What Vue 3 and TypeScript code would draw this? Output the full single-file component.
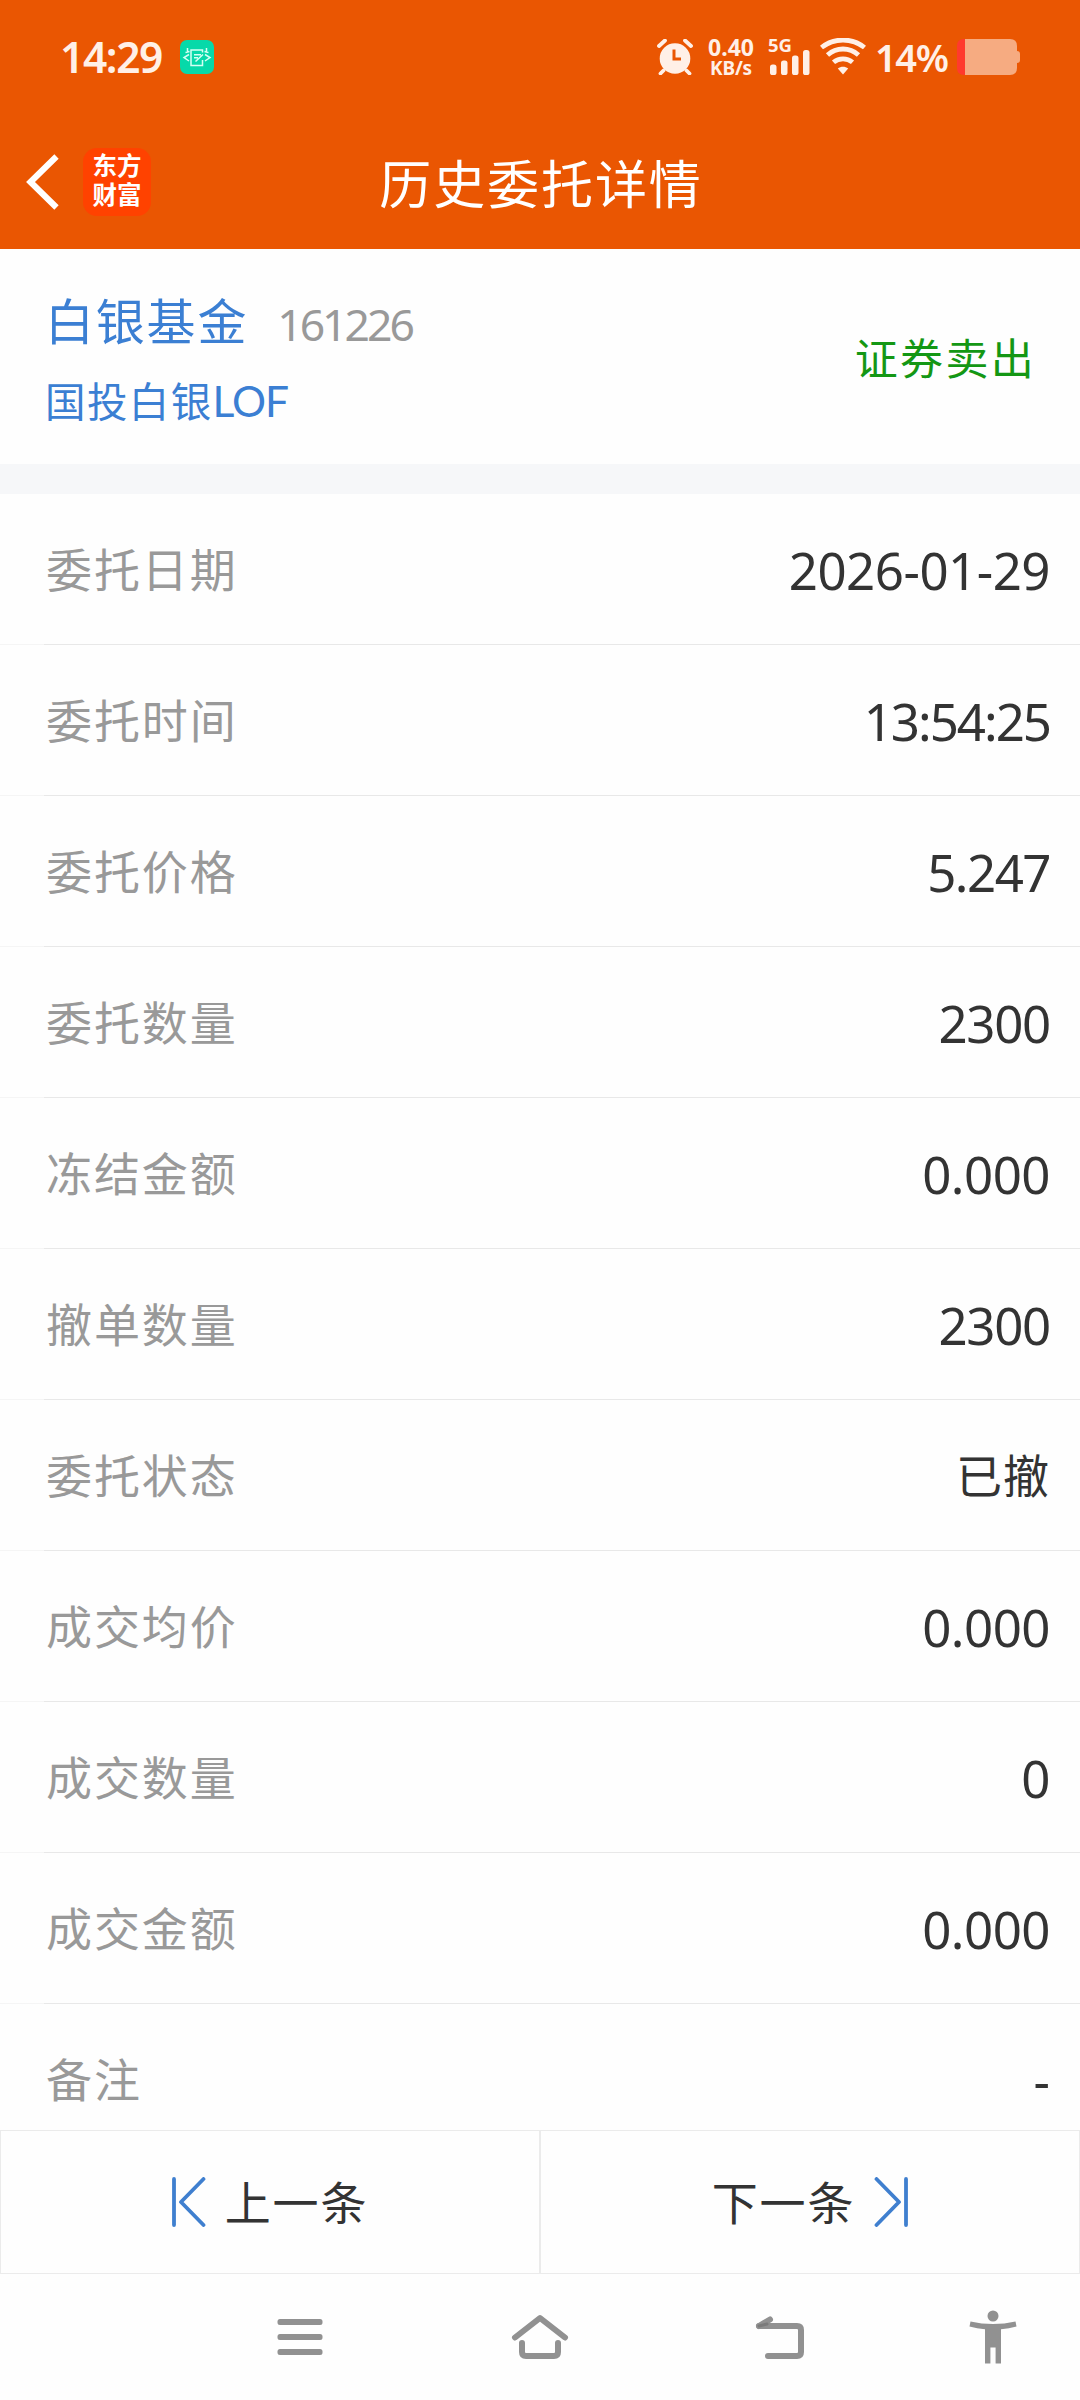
<script setup lang="ts">
interface Row {
  label: string
  value: string
  spacing?: string
  han?: boolean
}

const rows: Row[] = [
  { label: '委托日期', value: '2026-01-29', spacing: '-0.5px' },
  { label: '委托时间', value: '13:54:25', spacing: '-2px' },
  { label: '委托价格', value: '5.247', spacing: '-1.5px' },
  { label: '委托数量', value: '2300', spacing: '-1.3px' },
  { label: '冻结金额', value: '0.000' },
  { label: '撤单数量', value: '2300', spacing: '-1.3px' },
  { label: '委托状态', value: '已撤', spacing: '1px', han: true },
  { label: '成交均价', value: '0.000' },
  { label: '成交数量', value: '0' },
  { label: '成交金额', value: '0.000' },
  { label: '备注', value: '-', spacing: '0px' },
]
</script>

<template>
  <div class="screen">
    <header class="top">
      <div class="status">
        <span class="clock">14:29</span>
        <svg class="app-badge" width="34" height="34" viewBox="0 0 34 34" fill="none">
          <rect width="34" height="34" rx="7" fill="#06d9a9" />
          <g stroke="#d5fff4" stroke-width="1.5">
            <path d="M22.500 20V25.500h-11.500V10h11.500v2.500M14 14.800h7M14 17.800h4M15.500 21.500l7.500-7" />
            <path d="M9 14.500l-5 3 5 3.500M25 14.500l5 3-5 3.500M7.500 8v4.500M26.500 8v4.500M5.500 12.500l4-1M28.500 12.500l-4-1" />
          </g>
        </svg>
        <span class="grow"></span>
        <svg class="alarm" width="36" height="36" viewBox="0 0 36 36" fill="none">
          <circle cx="18" cy="19.500" r="15.300" fill="#fff0e7" />
          <path d="M2 7l6-5.500M34 7l-6-5.500M6.500 31.500L3.500 34.500M29.500 31.500l3 3" stroke="#fff0e7" stroke-width="3.800" stroke-linecap="round" />
          <path d="M17 10.500V20h7" stroke="#ea5602" stroke-width="3" />
        </svg>
        <div class="speed"><span class="rate">0.40</span><span class="unit">KB/s</span></div>
        <div class="cell">
          <span class="gen">5G</span>
          <svg class="bars" width="40" height="25" viewBox="0 0 40 25" fill="#fff0e7">
            <rect x="0" y="14.500" width="6.500" height="10.500" rx="2.600" />
            <rect x="11" y="10.500" width="6.500" height="14.500" rx="2.600" />
            <rect x="22" y="5.500" width="6.500" height="19.500" rx="2.600" />
            <rect x="33" y="0" width="6.500" height="25" rx="2.600" />
          </svg>
        </div>
        <svg class="wifi" width="46" height="37" viewBox="0 0 46 37" fill="none" stroke="#fff0e7" stroke-width="4.800">
          <path d="M1.500 9.500C14-.5 32-.5 44.500 9.500" />
          <path d="M7.500 17C16.500 9 29.500 9 38.500 17" />
          <path d="M13.500 24.300c5.500-4.700 13.500-4.700 19 0" />
          <path d="M17.800 30.500c3.200-2.500 7.200-2.500 10.400 0L23 36.500z" fill="#fff0e7" stroke="none" />
        </svg>
        <span class="percent">14%</span>
        <svg class="battery" width="63" height="36" viewBox="0 0 63 36">
          <path d="M8 0h45q7 0 7 7v5q3 0 3 3v6q0 3-3 3v5q0 7-7 7H8z" fill="#f6ab81" />
          <path d="M8 0v36H7q-7 0-7-7V7q0-7 7-7z" fill="#ff3a2d" />
        </svg>
      </div>
      <div class="nav">
        <svg class="back" width="34" height="56" viewBox="0 0 34 56" fill="none">
          <path d="M30.500 2.500L4.500 28l26 25.500" stroke="#fff" stroke-width="6.200" />
        </svg>
        <div class="brand">东方<br />财富</div>
        <h1 class="title">历史委托详情</h1>
      </div>
    </header>

    <section class="summary">
      <div class="names">
        <div class="first"><span class="fund">白银基金</span><span class="code">161226</span></div>
        <div class="alias">国投白银<span class="latin">LOF</span></div>
      </div>
      <div class="side">证券卖出</div>
    </section>

    <main class="rows">
      <div v-for="row in rows" :key="row.label" class="row">
        <span class="label">{{ row.label }}</span>
        <span class="value" :class="{ han: row.han }" :style="{ letterSpacing: row.spacing }">{{ row.value }}</span>
      </div>
    </main>

    <div class="pager">
      <div class="page prev">
        <svg width="34" height="50" viewBox="0 0 34 50" fill="none" stroke="#3f7fcf" stroke-width="3.800" stroke-linecap="round" stroke-linejoin="round">
          <path d="M2 2v46M31.500 2L9 25l22.500 23" />
        </svg>
        <span>上一条</span>
      </div>
      <div class="page next">
        <span>下一条</span>
        <svg width="34" height="50" viewBox="0 0 34 50" fill="none" stroke="#3f7fcf" stroke-width="3.800" stroke-linecap="round" stroke-linejoin="round">
          <path d="M32 2v46M2.500 2L25 25 2.500 48" />
        </svg>
      </div>
    </div>

    <footer class="system">
      <svg width="46" height="38" viewBox="0 0 46 38" fill="#919191">
        <rect x="0.500" y="1" width="45" height="6" rx="2.500" />
        <rect x="0.500" y="16" width="45" height="6" rx="2.500" />
        <rect x="0.500" y="31" width="45" height="6" rx="2.500" />
      </svg>
      <svg class="home" width="58" height="46" viewBox="0 0 58 46" fill="none" stroke="#919191" stroke-width="6" stroke-linecap="round" stroke-linejoin="round">
        <path d="M4 24.500L29 5l25 19.500" />
        <path d="M11 30v9q0 4 4 4h28q4 0 4-4v-9" />
      </svg>
      <svg class="return" width="50" height="46" viewBox="0 0 50 46" fill="none" stroke="#919191" stroke-width="6" stroke-linecap="round" stroke-linejoin="round">
        <path d="M4 13h38q4 0 4 4v22q0 4-4 4H13" />
        <path d="M4 13l11-6.500" />
        <path d="M4 13l8-2" stroke="#7b7b7b" stroke-width="3" />
      </svg>
      <svg class="person" width="48" height="54" viewBox="0 0 48 54" fill="#919191">
        <circle cx="24" cy="6" r="5.500" />
        <path d="M1.500 11.500Q24 16.500 46.500 11.500L47.500 16.500Q40 18.800 32 19.300V53.500H26.600V37.500H21.400V53.500H16V19.300Q8 18.800.5 16.500z" />
      </svg>
    </footer>
  </div>
</template>

<style>
body {
  margin: 0;
  background: #fefefe;
}
</style>

<style scoped>
.screen {
  width: 1080px;
  height: 2400px;
  overflow: hidden;
  display: flex;
  flex-direction: column;
  background: #fefefe;
  color: #333;
  font-family: "Noto Sans", "Noto Sans CJK SC", sans-serif;
  white-space: nowrap;
}
.top {
  height: 249px;
  flex: none;
  background: #ea5602;
  color: #fff;
}
.status {
  height: 114px;
  display: flex;
  align-items: center;
  padding: 0 60px 0 60px;
  box-sizing: border-box;
  color: #fff0e7;
}
.clock {
  width: 120px;
  font-size: 42.500px;
  font-weight: 600;
  letter-spacing: -1.400px;
  padding-bottom: 1px;
}
.grow {
  flex: 1;
}
.alarm {
  margin: 0 14px 1px 0;
}
.speed {
  width: 48px;
  display: flex;
  flex-direction: column;
  align-items: center;
  font-weight: 700;
  margin-right: 13px;
}
.rate {
  font-size: 23px;
  line-height: 21px;
}
.unit {
  font-size: 19px;
  line-height: 20px;
  letter-spacing: -0.200px;
}
.cell {
  width: 43px;
  height: 37px;
  position: relative;
  margin: 0 9px 1px 0;
}
.gen {
  position: absolute;
  left: 0;
  top: 0;
  font-size: 18.500px;
  line-height: 14px;
  font-weight: 700;
}
.bars {
  position: absolute;
  left: 2px;
  bottom: 0;
}
.wifi {
  margin: 0 9px 1px 0;
}
.percent {
  width: 82px;
  font-size: 38px;
  font-weight: 600;
  letter-spacing: -1.400px;
  padding-bottom: 1px;
}
.battery {
  margin-bottom: 1px;
}
.nav {
  height: 135px;
  display: flex;
  align-items: center;
  position: relative;
  padding-left: 26px;
}
.back {
  margin-right: 23px;
}
.brand {
  width: 68px;
  height: 68px;
  border-radius: 14px;
  background: #ff4200;
  box-sizing: border-box;
  padding-top: 2px;
  text-align: center;
  font-family: "Noto Sans CJK SC", sans-serif;
  font-size: 24.500px;
  line-height: 29px;
  font-weight: 700;
}
.title {
  position: absolute;
  left: 0;
  right: 0;
  top: 32px;
  margin: 0;
  padding-left: 2px;
  text-align: center;
  font-size: 52px;
  line-height: 76px;
  font-weight: 400;
  letter-spacing: 1.900px;
}
.summary {
  height: 215px;
  flex: none;
  box-sizing: border-box;
  padding: 36px 46px 0 45px;
  display: flex;
  justify-content: space-between;
}
.first {
  display: flex;
  height: 82px;
}
.fund {
  color: #3b7fd3;
  font-size: 49px;
  line-height: 72px;
  letter-spacing: 1.800px;
  margin-right: 29px;
}
.code {
  color: #999;
  font-size: 44.500px;
  line-height: 78px;
  letter-spacing: -3px;
}
.alias {
  color: #3b7fd3;
  font-size: 40.500px;
  line-height: 68px;
  letter-spacing: 1.400px;
}
.latin {
  font-family: Lato, sans-serif;
  font-size: 42.500px;
  letter-spacing: -1px;
}
.side {
  color: #149714;
  font-size: 43px;
  line-height: 68px;
  letter-spacing: 2.300px;
  margin-right: -2px;
  padding-top: 40px;
}
.rows {
  height: 1636px;
  flex: none;
  overflow: hidden;
  border-top: 30px solid #f6f7f9;
}
.row {
  height: 151px;
  box-sizing: border-box;
  padding: 0 30px 0 46px;
  display: flex;
  align-items: center;
  justify-content: space-between;
  border-bottom: 1px solid;
  border-image: linear-gradient(90deg, #f5f5f5 45px, #e8e8e8 45px) 1;
}
.label {
  color: #999;
  font-size: 46px;
  letter-spacing: 1.900px;
  padding-bottom: 4px;
}
.value {
  font-size: 51px;
  letter-spacing: -0.500px;
  padding-top: 2px;
}
.value.han {
  font-size: 46px;
  padding: 0 0 4px;
}
.pager {
  height: 144px;
  flex: none;
  display: flex;
}
.page {
  width: 540px;
  box-sizing: border-box;
  border: 1px solid #ebebeb;
  display: flex;
  align-items: center;
  justify-content: center;
  gap: 19px;
  font-size: 46px;
  letter-spacing: 1.900px;
}
.page span {
  padding-bottom: 5px;
}
.page svg {
  margin-bottom: 1px;
}
.system {
  flex: 1;
  display: flex;
  align-items: center;
  padding-left: 277px;
  height: 126px;
}
.home {
  margin: 0 0 2px 188px;
}
.return {
  margin: 0 0 2px 186px;
}
.person {
  margin-left: 164px;
}
</style>
